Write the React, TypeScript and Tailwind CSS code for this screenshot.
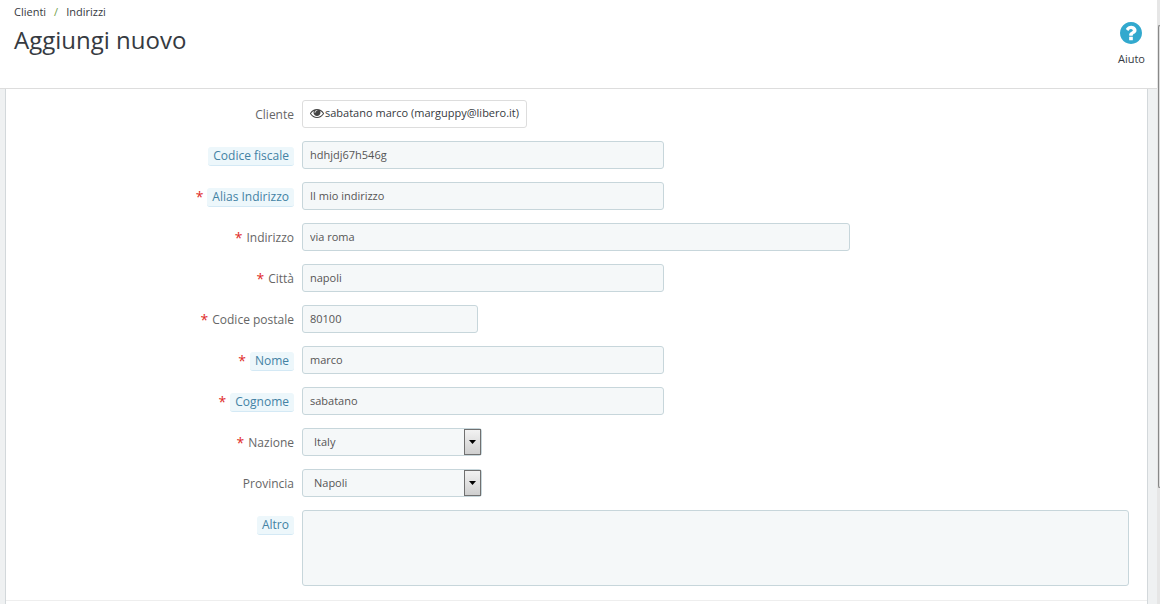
import React from 'react';

type IconProps = React.SVGProps<SVGSVGElement>;

const EyeIcon = (props: IconProps) => (
  <svg {...props} viewBox="0 0 1792 1792" fill="currentColor" aria-hidden="true">
    <path d="M1664 960q-152-236-381-353 61 104 61 225 0 185-131.5 316.5t-316.5 131.5-316.5-131.5-131.5-316.5q0-121 61-225-229 117-381 353 133 205 333.5 326.5t434.5 121.5 434.5-121.5 333.5-326.5zm-720-384q0-20-14-34t-34-14q-125 0-214.5 89.5t-89.5 214.5q0 20 14 34t34 14 34-14 14-34q0-86 61-147t147-61q20 0 34-14t14-34zm848 384q0 34-20 69-140 230-376.5 368.5t-499.5 138.5-499.5-139-376.5-368q-20-35-20-69t20-69q140-229 376.5-368t499.5-139 499.5 139 376.5 368q20 35 20 69z" />
  </svg>
);

const HelpIcon = (props: IconProps) => (
  <svg {...props} viewBox="128 128 1536 1536" fill="currentColor" aria-hidden="true">
    <path d="M1024 1376v-192q0-14-9-23t-23-9h-192q-14 0-23 9t-9 23v192q0 14 9 23t23 9h192q14 0 23-9t9-23zm256-672q0-88-55.5-163t-138.5-116-170-41q-243 0-371 213-15 24 8 42l132 100q7 6 19 6 16 0 25-12 53-68 86-92 34-24 86-24 48 0 85.5 26t37.5 59q0 38-20 61t-68 45q-63 28-115.5 86.5t-52.5 125.5v36q0 14 9 23t23 9h192q14 0 23-9t9-23q0-19 21.5-49.5t54.5-49.5q32-18 49-28.5t46-35 44.5-48 28-60.5 12.5-81zm384 192q0 209-103 385.5t-279.5 279.5-385.5 103-385.5-103-279.5-279.5-103-385.5 103-385.5 279.5-279.5 385.5-103 385.5 103 279.5 279.5 103 385.5z" />
  </svg>
);

type FieldProps = {
  id: string;
  label: string;
  required?: boolean;
  hint?: boolean;
  children: React.ReactNode;
};

const control =
  'block w-full h-[28px] rounded-[3px] border border-[#c7d6db] bg-[#f5f8f9] text-[11px] text-[#555]';

// One form row: right-aligned label in 3 columns, control in the rest
const Field = ({ id, label, required, hint, children }: FieldProps) => (
  <div className="grid grid-cols-12 gap-x-[10px]">
    <label
      htmlFor={id}
      className="col-span-3 -mr-[2px] flex items-start justify-end gap-1 pt-[6px] text-xs leading-[18px] text-[#666]"
    >
      {required && <span className="text-sm leading-[18px] text-[#e02b27]">*</span>}
      {hint ? (
        <span className="rounded-[3px] border-b border-[#d4e9f5] bg-[#edf7fb] px-[5px] text-[#4382a4]">
          {label}
        </span>
      ) : (
        <span>{label}</span>
      )}
    </label>
    {children}
  </div>
);

type ValueFieldProps = Omit<FieldProps, 'children'> & { value: string };

const TextField = ({ value, span = 'col-span-4', ...field }: ValueFieldProps & { span?: string }) => (
  <Field {...field}>
    <div className={span}>
      <input id={field.id} type="text" defaultValue={value} className={`${control} px-[7px] pb-[2px]`} />
    </div>
  </Field>
);

const SelectField = ({ value, ...field }: ValueFieldProps) => (
  <Field {...field}>
    <div className="col-span-4">
      <div className="relative w-[180px]">
        <select id={field.id} className={`${control} appearance-none pl-[11px]`}>
          <option>{value}</option>
        </select>
        <span className="pointer-events-none absolute inset-y-px right-px flex w-[17px] items-center justify-center border border-[#707070] bg-gradient-to-b from-[#f2f2f2] to-[#cfcfcf]">
          <svg width="7" height="4" viewBox="0 0 7 4" aria-hidden="true">
            <path d="M0 0h7L3.5 4z" fill="#000" />
          </svg>
        </span>
      </div>
    </div>
  </Field>
);

export default function App() {
  return (
    <div className="flex min-h-screen bg-[#eff1f2] font-['Open_Sans',sans-serif] text-xs text-[#363a41]">
      <div className="flex min-w-0 flex-1 flex-col">
        <header className="flex h-[89px] shrink-0 justify-between border-b border-[#ddd] bg-white pr-3 pl-[14px]">
          <div>
            <nav className="flex gap-2 pt-1 text-[11px] leading-4">
              <a href="#clienti">Clienti</a>
              <span className="text-[#72a04a]">/</span>
              <a href="#indirizzi">Indirizzi</a>
            </nav>
            <h1 className="pt-1 text-2xl leading-8">Aggiungi nuovo</h1>
          </div>
          <a href="#aiuto" className="flex flex-col items-center pt-[22px]">
            <HelpIcon className="size-[22px] text-[#32a9ce]" />
            <span className="pt-[7px] text-[11px] leading-4">Aiuto</span>
          </a>
        </header>

        <main className="flex flex-1 flex-col pr-[9px] pl-[5px]">
          <form className="flex-1 border-x border-[#d3d8db] bg-white">
            <div className="flex flex-col gap-[13px] border-b border-[#eee] pt-[11px] pr-[18px] pb-[14px] pl-[17px]">
              <Field id="cliente" label="Cliente">
                <div className="col-span-9">
                  <button
                    id="cliente"
                    type="button"
                    className="flex h-[28px] items-center gap-px rounded-[3px] border border-[#ddd] bg-white px-[7px] pb-[2px] text-[11px]"
                  >
                    <EyeIcon className="size-[14px] text-[#444]" />
                    sabatano marco (marguppy@libero.it)
                  </button>
                </div>
              </Field>
              <TextField id="cf" label="Codice fiscale" hint value="hdhjdj67h546g" />
              <TextField id="alias" label="Alias Indirizzo" hint required value="Il mio indirizzo" />
              <TextField id="indirizzo" label="Indirizzo" required value="via roma" span="col-span-6" />
              <TextField id="citta" label="Città" required value="napoli" />
              <TextField id="cap" label="Codice postale" required value="80100" span="col-span-2" />
              <TextField id="nome" label="Nome" hint required value="marco" />
              <TextField id="cognome" label="Cognome" hint required value="sabatano" />
              <SelectField id="nazione" label="Nazione" required value="Italy" />
              <SelectField id="provincia" label="Provincia" value="Napoli" />
              <Field id="altro" label="Altro" hint>
                <textarea
                  id="altro"
                  className="col-span-9 block h-[76px] resize-none rounded-[3px] border border-[#c7d6db] bg-[#f5f8f9] p-2 text-[11px]"
                />
              </Field>
            </div>
          </form>
        </main>
      </div>

      {/* Scrollbar */}
      <div className="flex w-[3px] flex-col bg-[#e6e6e6] pt-[25px] pl-px">
        <div className="basis-4/5 rounded-l-sm border-y border-l border-[#888] bg-[#ddd]" />
      </div>
    </div>
  );
}
